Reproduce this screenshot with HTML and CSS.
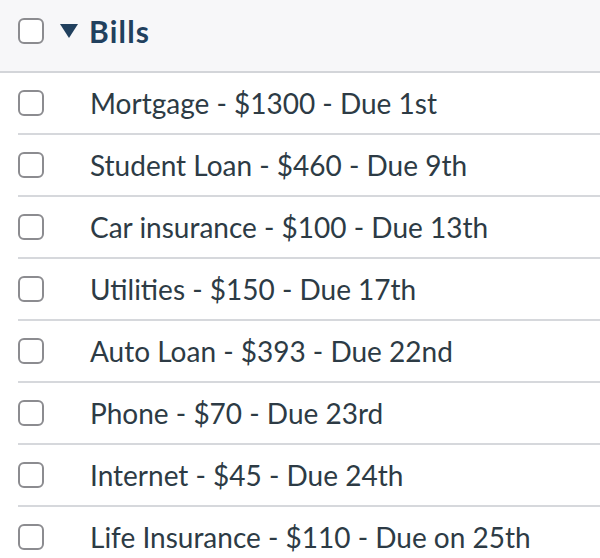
FILE: index.html
```html
<!DOCTYPE html>
<html>
<head>
<meta charset="utf-8">
<link rel="stylesheet" href="styles.css">
</head>
<body>
<div class="list">
  <div class="header">
    <span class="box"></span>
    <span class="caret"></span>
    <span class="title">Bills</span>
  </div>
  <div class="items">
    <div class="item"><span class="box"></span><span class="label">Mortgage - $1300 - Due 1st</span></div>
    <div class="item"><span class="box"></span><span class="label">Student Loan - $460 - Due 9th</span></div>
    <div class="item"><span class="box"></span><span class="label">Car insurance - $100 - Due 13th</span></div>
    <div class="item"><span class="box"></span><span class="label">Utilities - $150 - Due 17th</span></div>
    <div class="item"><span class="box"></span><span class="label">Auto Loan - $393 - Due 22nd</span></div>
    <div class="item"><span class="box"></span><span class="label">Phone - $70 - Due 23rd</span></div>
    <div class="item"><span class="box"></span><span class="label">Internet - $45 - Due 24th</span></div>
    <div class="item"><span class="box"></span><span class="label">Life Insurance - $110 - Due on 25th</span></div>
  </div>
</div>
</body>
</html>
```
FILE: styles.css
```css
html, body {
  margin: 0;
  padding: 0;
  background: #ffffff;
}
body {
  width: 600px;
  height: 558px;
  overflow: hidden;
  font-family: Lato, "Liberation Sans", sans-serif;
}
.header {
  height: 62px;
  padding-bottom: 9px;
  background: #f7f7f9;
  border-bottom: 2px solid #d3d5d9;
  display: flex;
  align-items: center;
  padding-left: 18px;
}
.box {
  width: 26px;
  height: 26px;
  box-sizing: border-box;
  border: 2px solid #8c8c90;
  border-radius: 6px;
  background: #ffffff;
  flex: none;
}
.caret {
  width: 0;
  height: 0;
  border-left: 9.5px solid transparent;
  border-right: 9.5px solid transparent;
  border-top: 14px solid #21405e;
  margin-left: 16px;
}
.title {
  margin-left: 11px;
  font-size: 30px;
  font-weight: 700;
  letter-spacing: 1.2px;
  color: #21405e;
}
.items {
  padding-left: 18px;
}
.item {
  height: 60px;
  border-bottom: 2px solid #d6d8dc;
  display: flex;
  align-items: center;
}
.label {
  margin-left: 46px;
  font-size: 28px;
  color: #2d3b45;
}
```
